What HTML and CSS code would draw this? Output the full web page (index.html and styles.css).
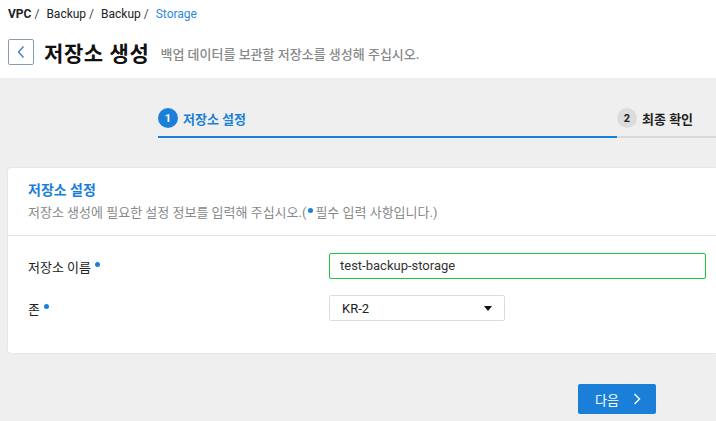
FILE: index.html
```html
<!DOCTYPE html>
<html lang="ko">
<head>
<meta charset="utf-8">
<link rel="stylesheet" href="styles.css">
</head>
<body>
<header class="header">
  <nav class="crumbs">
    <span class="crumb strong">VPC</span><span class="sep">/</span>
    <span class="crumb">Backup</span><span class="sep">/</span>
    <span class="crumb">Backup</span><span class="sep">/</span>
    <span class="crumb current">Storage</span>
  </nav>
  <div class="title-row">
    <button class="back" type="button">
      <svg width="10" height="14" viewBox="0 0 10 14"><path d="M7.5 1.5 L2.5 7 L7.5 12.5" fill="none" stroke="#3a78c2" stroke-width="1.3"/></svg>
    </button>
    <h1 class="title">저장소 생성</h1>
    <p class="subtitle">백업 데이터를 보관할 저장소를 생성해 주십시오.</p>
  </div>
</header>
<main class="main">
  <div class="stepper">
    <div class="step active"><span class="num">1</span><span class="label">저장소 설정</span></div>
    <div class="step next"><span class="num">2</span><span class="label">최종 확인</span></div>
  </div>
  <section class="card">
    <div class="card-head">
      <h2 class="card-title">저장소 설정</h2>
      <p class="card-desc">저장소 생성에 필요한 설정 정보를 입력해 주십시오.(<span class="dot"></span>필수 입력 사항입니다.)</p>
    </div>
    <div class="card-body">
      <div class="row">
        <label class="field-label">저장소 이름 <span class="dot"></span></label>
        <div class="input">test-backup-storage</div>
      </div>
      <div class="row">
        <label class="field-label">존 <span class="dot"></span></label>
        <div class="select"><span>KR-2</span><span class="caret"></span></div>
      </div>
    </div>
  </section>
  <div class="actions">
    <button class="next-btn" type="button">다음
      <svg width="8" height="12" viewBox="0 0 8 12"><path d="M1.5 1 L6.5 6 L1.5 11" fill="none" stroke="#fff" stroke-width="1.4"/></svg>
    </button>
  </div>
</main>
</body>
</html>
```
FILE: styles.css
```css
* { box-sizing: border-box; margin: 0; padding: 0; }
html, body { height: 100%; }
body {
  font-family: Roboto, "Noto Sans CJK KR", sans-serif;
  color: #222;
  background: #efefef;
  overflow: hidden;
}
.header {
  background: #fff;
  padding: 6px 8px 0 8px;
  height: 78px;
}
.crumbs {
  font-size: 12px;
  line-height: 16px;
  color: #222;
}
.crumb.strong { font-weight: 700; }
.crumb.current { color: #2d8ae0; }
.sep { margin: 0 4px 0 3px; color: #444; }
.title-row {
  display: flex;
  align-items: center;
  margin-top: 15px;
}
.back {
  width: 26px;
  height: 26px;
  border: 1px solid #8a9bb0;
  border-radius: 2px;
  background: #fff;
  display: flex;
  align-items: center;
  justify-content: center;
}
.title {
  font-size: 21px;
  font-weight: 700;
  margin-left: 10px;
  letter-spacing: 0.6px;
  color: #111;
}
.subtitle {
  font-size: 13px;
  color: #888;
  margin-left: 11px;
  margin-top: 2px;
  font-weight: 500;
}
.main {
  padding-top: 30px;
}
.stepper {
  display: flex;
  padding-left: 158px;
}
.step {
  display: flex;
  align-items: center;
  gap: 5px;
  padding-bottom: 8px;
  border-bottom: 2px solid #d8d8d8;
  font-size: 13px;
  font-weight: 700;
}
.step.active {
  width: 459px;
  border-bottom-color: #1a7fd8;
  color: #1a7fd8;
}
.step.next { flex: 1; color: #222; }
.num {
  width: 20px;
  height: 20px;
  border-radius: 50%;
  display: flex;
  align-items: center;
  justify-content: center;
  font-size: 11px;
  font-weight: 700;
}
.active .num { background: #1a7fd8; color: #fff; }
.next .num { background: #dcdcdc; color: #222; }
.card {
  margin: 30px 0 0 8px;
  background: #fff;
  border-radius: 3px 0 0 3px;
  box-shadow: 0 0 2px rgba(0,0,0,0.12);
  height: 185px;
}
.card-head {
  padding: 13px 20px 14px 20px;
  border-bottom: 1px solid #e3e3e3;
}
.card-title {
  font-size: 14px;
  font-weight: 700;
  color: #1a7fd8;
  line-height: 18px;
}
.card-desc {
  font-size: 13px;
  color: #888;
  line-height: 16px;
  margin-top: 6px;
}
.dot {
  display: inline-block;
  width: 5px;
  height: 5px;
  border-radius: 50%;
  background: #1a7fd8;
  vertical-align: 4px;
  margin: 0 2px;
}
.field-label .dot { vertical-align: 5px; margin-left: 1px; }
.card-body {
  padding: 17px 10px 0 20px;
  display: flex;
  flex-direction: column;
  gap: 16px;
}
.row {
  display: flex;
  align-items: center;
  height: 26px;
}
.field-label {
  width: 301px;
  font-size: 13px;
  color: #222;
}
.input {
  flex: 1;
  height: 26px;
  border: 1px solid #1ec53f;
  border-radius: 2px;
  padding-left: 10px;
  font-size: 13px;
  line-height: 24px;
  color: #333;
}
.select {
  width: 176px;
  height: 26px;
  border: 1px solid #dcdcdc;
  border-radius: 2px;
  padding: 0 12px 0 12px;
  display: flex;
  align-items: center;
  justify-content: space-between;
  font-size: 13px;
  color: #222;
}
.caret {
  width: 0;
  height: 0;
  border-left: 4.5px solid transparent;
  border-right: 4.5px solid transparent;
  border-top: 5px solid #111;
}
.actions {
  display: flex;
  padding-left: 578px;
  margin-top: 31px;
}
.next-btn {
  width: 78px;
  height: 30px;
  background: #1a7fd8;
  border: none;
  border-radius: 2px;
  color: #fff;
  font-family: Roboto, "Noto Sans CJK KR", sans-serif;
  font-size: 13px;
  display: flex;
  align-items: center;
  padding-left: 17px;
  gap: 14px;
}
```
